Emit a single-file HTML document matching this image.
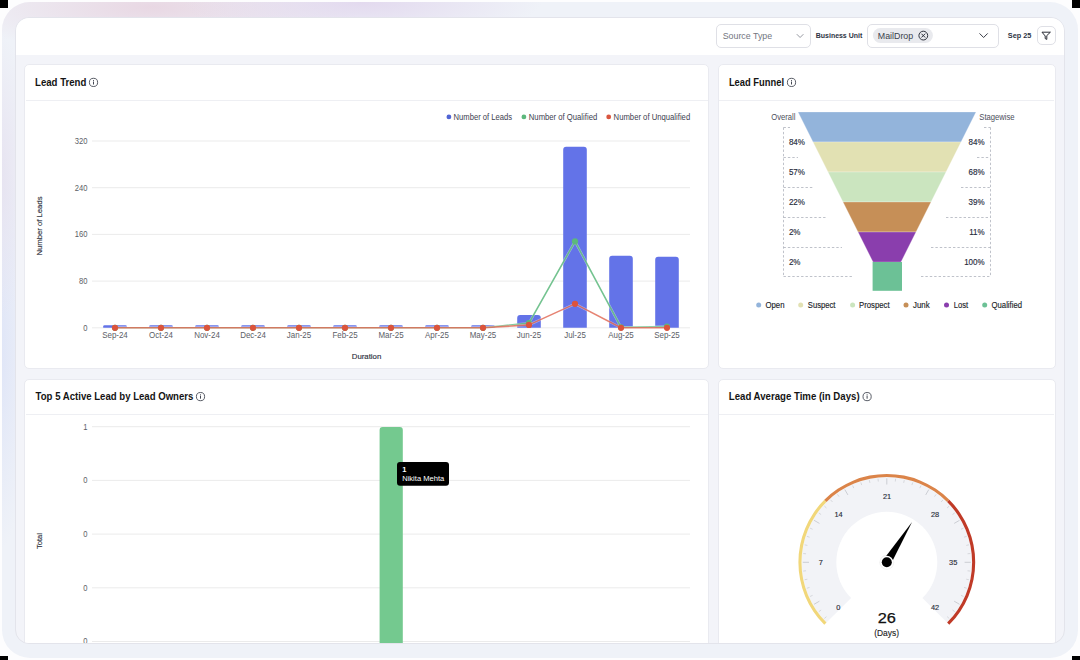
<!DOCTYPE html>
<html><head><meta charset="utf-8">
<style>
html,body{margin:0;padding:0;}
body{width:1080px;height:660px;position:relative;overflow:hidden;background:#fdfdfe;font-family:"Liberation Sans", sans-serif;}
.corner{position:absolute;width:8px;height:8px;background:#000;}
.frame{position:absolute;left:2px;top:2px;width:1076px;height:656px;border-radius:28px;background:#eff2f8;overflow:hidden;}
.glow{position:absolute;border-radius:50%;}
.panel{position:absolute;left:15px;top:17px;width:1048px;height:625px;border-radius:14px;background:#f3f4f9;
  border:1px solid #e3e4eb;overflow:hidden;}
.hdr{position:absolute;left:0;top:0;width:1048px;height:37px;background:#fff;}
.card{position:absolute;background:#fff;border:1px solid #e9eaf0;border-radius:5px;box-sizing:border-box;}
.sel{position:absolute;border:1px solid #dfe0e6;border-radius:5px;box-sizing:border-box;background:#fff;}
svg{position:absolute;left:0;top:0;}
text{font-family:"Liberation Sans", sans-serif;}
.ax{font-size:7.6px;fill:#5b5e66;}
.an{font-size:7.6px;fill:#2e3240;stroke:#2e3240;stroke-width:0.15;}
.lg{font-size:7.8px;fill:#3d4150;}
.fp{font-size:8px;fill:#262b3b;stroke:#262b3b;stroke-width:0.14;}
.fl{font-size:8px;fill:#4a4e5a;}
.fg{font-size:8px;fill:#1a1d27;stroke:#1a1d27;stroke-width:0.14;}
.tt{font-size:7.5px;fill:#fff;}
.gl{font-size:7.4px;fill:#2a2e3a;stroke:#2a2e3a;stroke-width:0.15;}
.gv{font-size:14.9px;fill:#111;stroke:#111;stroke-width:0.25;}
.gd{font-size:8.6px;fill:#222;stroke:#222;stroke-width:0.12;}
.hs{font-size:9.3px;fill:#73767f;}
.hb{font-size:7.3px;font-weight:bold;fill:#2d3344;}
.hm{font-size:8.2px;fill:#3a3f4b;}
.title{font-size:10px;font-weight:bold;fill:#141414;}
</style></head><body>
<div class="corner" style="left:0;top:0"></div>
<div class="corner" style="right:0;top:0"></div>
<div class="corner" style="left:0;bottom:0;height:4px"></div>
<div class="corner" style="right:0;bottom:0;height:4px"></div>
<div class="frame">
  <div class="glow" style="left:-60px;top:-40px;width:420px;height:90px;background:radial-gradient(closest-side,rgba(232,214,226,0.95),rgba(232,214,226,0))"></div>
  <div class="glow" style="left:180px;top:-40px;width:360px;height:80px;background:radial-gradient(closest-side,rgba(226,216,238,0.95),rgba(226,216,238,0))"></div>
  <div class="glow" style="left:-40px;top:150px;width:70px;height:400px;background:radial-gradient(closest-side,rgba(222,228,247,1),rgba(222,228,247,0))"></div>
  <div class="glow" style="left:-40px;top:30px;width:70px;height:290px;background:radial-gradient(closest-side,rgba(230,226,240,1),rgba(230,226,240,0))"></div>
</div>
<div class="panel">
  <div class="hdr"></div>
  <div class="card" style="left:8px;top:46px;width:685px;height:305px"></div>
  <div class="card" style="left:702px;top:46px;width:338px;height:305px"></div>
  <div class="card" style="left:8px;top:361px;width:685px;height:300px"></div>
  <div class="card" style="left:702px;top:361px;width:338px;height:300px"></div>
</div>
<div class="sel" style="left:716px;top:23.5px;width:95px;height:24px"></div>
<div class="sel" style="left:867px;top:23.5px;width:131.5px;height:24.5px"></div>
<div class="sel" style="left:1036.5px;top:26px;width:19px;height:19px"></div>
<svg width="1080" height="660" viewBox="0 0 1080 660">
<defs><clipPath id="pc"><rect x="16" y="18" width="1048" height="625" rx="13"/></clipPath></defs>
<g clip-path="url(#pc)">
<line x1="26" y1="100.5" x2="708" y2="100.5" stroke="#eeeff3"/>
<line x1="719" y1="100.5" x2="1054" y2="100.5" stroke="#eeeff3"/>
<line x1="26" y1="414.5" x2="708" y2="414.5" stroke="#eeeff3"/>
<line x1="719" y1="414.5" x2="1054" y2="414.5" stroke="#eeeff3"/>
<text x="35" y="85.8" class="title" textLength="51.4" lengthAdjust="spacingAndGlyphs">Lead Trend</text><circle cx="93.5" cy="82.4" r="4.1" fill="none" stroke="#3a3e4a" stroke-width="0.85"/><line x1="93.5" y1="81.9" x2="93.5" y2="84.10000000000001" stroke="#3a3e4a" stroke-width="0.95" stroke-linecap="round"/><circle cx="93.5" cy="80.5" r="0.55" fill="#3a3e4a"/>
<text x="728.9" y="85.8" class="title" textLength="55.2" lengthAdjust="spacingAndGlyphs">Lead Funnel</text><circle cx="791.5" cy="82.4" r="4.1" fill="none" stroke="#3a3e4a" stroke-width="0.85"/><line x1="791.5" y1="81.9" x2="791.5" y2="84.10000000000001" stroke="#3a3e4a" stroke-width="0.95" stroke-linecap="round"/><circle cx="791.5" cy="80.5" r="0.55" fill="#3a3e4a"/>
<text x="35.6" y="400.3" class="title" textLength="157.8" lengthAdjust="spacingAndGlyphs">Top 5 Active Lead by Lead Owners</text><circle cx="200.5" cy="396.6" r="4.1" fill="none" stroke="#3a3e4a" stroke-width="0.85"/><line x1="200.5" y1="396.1" x2="200.5" y2="398.3" stroke="#3a3e4a" stroke-width="0.95" stroke-linecap="round"/><circle cx="200.5" cy="394.70000000000005" r="0.55" fill="#3a3e4a"/>
<text x="728.8" y="400.3" class="title" textLength="130.8" lengthAdjust="spacingAndGlyphs">Lead Average Time (in Days)</text><circle cx="867.1" cy="396.6" r="4.1" fill="none" stroke="#3a3e4a" stroke-width="0.85"/><line x1="867.1" y1="396.1" x2="867.1" y2="398.3" stroke="#3a3e4a" stroke-width="0.95" stroke-linecap="round"/><circle cx="867.1" cy="394.70000000000005" r="0.55" fill="#3a3e4a"/>
<line x1="92" y1="141.00" x2="690" y2="141.00" stroke="#ebebeb" stroke-width="1"/><text x="87.4" y="143.85" class="ax" text-anchor="end" textLength="12.68" lengthAdjust="spacingAndGlyphs" style="font-size:8.3px">320</text><line x1="92" y1="187.70" x2="690" y2="187.70" stroke="#ebebeb" stroke-width="1"/><text x="87.4" y="190.55" class="ax" text-anchor="end" textLength="12.68" lengthAdjust="spacingAndGlyphs" style="font-size:8.3px">240</text><line x1="92" y1="234.40" x2="690" y2="234.40" stroke="#ebebeb" stroke-width="1"/><text x="87.4" y="237.25" class="ax" text-anchor="end" textLength="12.68" lengthAdjust="spacingAndGlyphs" style="font-size:8.3px">160</text><line x1="92" y1="281.10" x2="690" y2="281.10" stroke="#ebebeb" stroke-width="1"/><text x="87.4" y="283.95" class="ax" text-anchor="end" textLength="8.45" lengthAdjust="spacingAndGlyphs" style="font-size:8.3px">80</text><line x1="92" y1="327.80" x2="690" y2="327.80" stroke="#ebebeb" stroke-width="1"/><text x="87.4" y="330.65" class="ax" text-anchor="end" textLength="4.23" lengthAdjust="spacingAndGlyphs" style="font-size:8.3px">0</text><path d="M103.20,327.8 V326.52 Q103.20,325.23 104.48,325.23 H125.52 Q126.80,325.23 126.80,326.52 V327.8 Z" fill="#6373e8"/><text x="115" y="337.8" class="ax" text-anchor="middle" textLength="25.63" lengthAdjust="spacingAndGlyphs" style="font-size:8.3px">Sep-24</text><path d="M149.20,327.8 V326.52 Q149.20,325.23 150.48,325.23 H171.52 Q172.80,325.23 172.80,326.52 V327.8 Z" fill="#6373e8"/><text x="161" y="337.8" class="ax" text-anchor="middle" textLength="23.86" lengthAdjust="spacingAndGlyphs" style="font-size:8.3px">Oct-24</text><path d="M195.20,327.8 V326.52 Q195.20,325.23 196.48,325.23 H217.52 Q218.80,325.23 218.80,326.52 V327.8 Z" fill="#6373e8"/><text x="207" y="337.8" class="ax" text-anchor="middle" textLength="25.63" lengthAdjust="spacingAndGlyphs" style="font-size:8.3px">Nov-24</text><path d="M241.20,327.8 V326.52 Q241.20,325.23 242.48,325.23 H263.52 Q264.80,325.23 264.80,326.52 V327.8 Z" fill="#6373e8"/><text x="253" y="337.8" class="ax" text-anchor="middle" textLength="25.63" lengthAdjust="spacingAndGlyphs" style="font-size:8.3px">Dec-24</text><path d="M287.20,327.8 V326.52 Q287.20,325.23 288.48,325.23 H309.52 Q310.80,325.23 310.80,326.52 V327.8 Z" fill="#6373e8"/><text x="299" y="337.8" class="ax" text-anchor="middle" textLength="24.31" lengthAdjust="spacingAndGlyphs" style="font-size:8.3px">Jan-25</text><path d="M333.20,327.8 V326.52 Q333.20,325.23 334.48,325.23 H355.52 Q356.80,325.23 356.80,326.52 V327.8 Z" fill="#6373e8"/><text x="345" y="337.8" class="ax" text-anchor="middle" textLength="25.19" lengthAdjust="spacingAndGlyphs" style="font-size:8.3px">Feb-25</text><path d="M379.20,327.8 V326.52 Q379.20,325.23 380.48,325.23 H401.52 Q402.80,325.23 402.80,326.52 V327.8 Z" fill="#6373e8"/><text x="391" y="337.8" class="ax" text-anchor="middle" textLength="25.18" lengthAdjust="spacingAndGlyphs" style="font-size:8.3px">Mar-25</text><path d="M425.20,327.8 V326.52 Q425.20,325.23 426.48,325.23 H447.52 Q448.80,325.23 448.80,326.52 V327.8 Z" fill="#6373e8"/><text x="437" y="337.8" class="ax" text-anchor="middle" textLength="23.86" lengthAdjust="spacingAndGlyphs" style="font-size:8.3px">Apr-25</text><path d="M471.20,327.8 V326.52 Q471.20,325.23 472.48,325.23 H493.52 Q494.80,325.23 494.80,326.52 V327.8 Z" fill="#6373e8"/><text x="483" y="337.8" class="ax" text-anchor="middle" textLength="26.51" lengthAdjust="spacingAndGlyphs" style="font-size:8.3px">May-25</text><path d="M517.20,327.8 V317.96 Q517.20,314.96 520.20,314.96 H537.80 Q540.80,314.96 540.80,317.96 V327.8 Z" fill="#6373e8"/><text x="529" y="337.8" class="ax" text-anchor="middle" textLength="24.31" lengthAdjust="spacingAndGlyphs" style="font-size:8.3px">Jun-25</text><path d="M563.20,327.8 V149.84 Q563.20,146.84 566.20,146.84 H583.80 Q586.80,146.84 586.80,149.84 V327.8 Z" fill="#6373e8"/><text x="575" y="337.8" class="ax" text-anchor="middle" textLength="21.65" lengthAdjust="spacingAndGlyphs" style="font-size:8.3px">Jul-25</text><path d="M609.20,327.8 V258.82 Q609.20,255.82 612.20,255.82 H629.80 Q632.80,255.82 632.80,258.82 V327.8 Z" fill="#6373e8"/><text x="621" y="337.8" class="ax" text-anchor="middle" textLength="25.63" lengthAdjust="spacingAndGlyphs" style="font-size:8.3px">Aug-25</text><path d="M655.20,327.8 V259.87 Q655.20,256.87 658.20,256.87 H675.80 Q678.80,256.87 678.80,259.87 V327.8 Z" fill="#6373e8"/><text x="667" y="337.8" class="ax" text-anchor="middle" textLength="25.63" lengthAdjust="spacingAndGlyphs" style="font-size:8.3px">Sep-25</text><polyline points="115,327.80 161,327.80 207,327.80 253,327.80 299,327.80 345,327.80 391,327.80 437,327.80 483,327.80 529,323.13 575,241.41 621,327.33 667,326.52" fill="none" stroke="#fff" stroke-width="2.4" stroke-opacity="0.45" stroke-linejoin="round"/><polyline points="115,327.80 161,327.80 207,327.80 253,327.80 299,327.80 345,327.80 391,327.80 437,327.80 483,327.80 529,323.13 575,241.41 621,327.33 667,326.52" fill="none" stroke="#5cb87c" stroke-width="1.6" stroke-opacity="0.85" stroke-linejoin="round"/><circle cx="115" cy="327.80" r="3.1" fill="#5cb87c"/><circle cx="161" cy="327.80" r="3.1" fill="#5cb87c"/><circle cx="207" cy="327.80" r="3.1" fill="#5cb87c"/><circle cx="253" cy="327.80" r="3.1" fill="#5cb87c"/><circle cx="299" cy="327.80" r="3.1" fill="#5cb87c"/><circle cx="345" cy="327.80" r="3.1" fill="#5cb87c"/><circle cx="391" cy="327.80" r="3.1" fill="#5cb87c"/><circle cx="437" cy="327.80" r="3.1" fill="#5cb87c"/><circle cx="483" cy="327.80" r="3.1" fill="#5cb87c"/><circle cx="529" cy="323.13" r="3.1" fill="#5cb87c"/><circle cx="575" cy="241.41" r="3.1" fill="#5cb87c"/><circle cx="621" cy="327.33" r="3.1" fill="#5cb87c"/><circle cx="667" cy="326.52" r="3.1" fill="#5cb87c"/><polyline points="115,327.80 161,327.80 207,327.80 253,327.80 299,327.80 345,327.80 391,327.80 437,327.80 483,327.80 529,324.88 575,303.87 621,327.80 667,327.80" fill="none" stroke="#fff" stroke-width="2.4" stroke-opacity="0.45" stroke-linejoin="round"/><polyline points="115,327.80 161,327.80 207,327.80 253,327.80 299,327.80 345,327.80 391,327.80 437,327.80 483,327.80 529,324.88 575,303.87 621,327.80 667,327.80" fill="none" stroke="#dc533c" stroke-width="1.6" stroke-opacity="0.72" stroke-linejoin="round"/><circle cx="115" cy="327.80" r="3.1" fill="#dc533c"/><circle cx="161" cy="327.80" r="3.1" fill="#dc533c"/><circle cx="207" cy="327.80" r="3.1" fill="#dc533c"/><circle cx="253" cy="327.80" r="3.1" fill="#dc533c"/><circle cx="299" cy="327.80" r="3.1" fill="#dc533c"/><circle cx="345" cy="327.80" r="3.1" fill="#dc533c"/><circle cx="391" cy="327.80" r="3.1" fill="#dc533c"/><circle cx="437" cy="327.80" r="3.1" fill="#dc533c"/><circle cx="483" cy="327.80" r="3.1" fill="#dc533c"/><circle cx="529" cy="324.88" r="3.1" fill="#dc533c"/><circle cx="575" cy="303.87" r="3.1" fill="#dc533c"/><circle cx="621" cy="327.80" r="3.1" fill="#dc533c"/><circle cx="667" cy="327.80" r="3.1" fill="#dc533c"/><circle cx="448.9" cy="116.9" r="2.4" fill="#5064d4"/><text x="453.6" y="119.8" class="lg" textLength="58.4" lengthAdjust="spacingAndGlyphs" style="font-size:8.6px">Number of Leads</text><circle cx="523.9" cy="116.9" r="2.4" fill="#5cb87c"/><text x="528.8000000000001" y="119.8" class="lg" textLength="68.4" lengthAdjust="spacingAndGlyphs" style="font-size:8.6px">Number of Qualified</text><circle cx="608.7" cy="116.9" r="2.4" fill="#d9553f"/><text x="613.6" y="119.8" class="lg" textLength="76.6" lengthAdjust="spacingAndGlyphs" style="font-size:8.6px">Number of Unqualified</text><text x="366.5" y="358.9" class="an" text-anchor="middle" textLength="29.5" lengthAdjust="spacingAndGlyphs">Duration</text><text transform="translate(42.4,226) rotate(-90)" text-anchor="middle" class="an" textLength="59" lengthAdjust="spacingAndGlyphs">Number of Leads</text>
<polygon points="798,112 976,112 961,142 813,142" fill="#93b4db" stroke="#fff" stroke-width="0.5" stroke-opacity="0.5"/><polygon points="813,142 961,142 946,172 828,172" fill="#e2e1b3" stroke="#fff" stroke-width="0.5" stroke-opacity="0.5"/><polygon points="828,172 946,172 931,202 843,202" fill="#cbe5bf" stroke="#fff" stroke-width="0.5" stroke-opacity="0.5"/><polygon points="843,202 931,202 916,232 858,232" fill="#c68f57" stroke="#fff" stroke-width="0.5" stroke-opacity="0.5"/><polygon points="858,232 916,232 901,262 873,262" fill="#8a3ead" stroke="#fff" stroke-width="0.5" stroke-opacity="0.5"/><rect x="872.6" y="262" width="29.4" height="28.8" fill="#6cc196"/><line x1="783.5" y1="127.5" x2="783.5" y2="276.5" stroke="#aeb2bc" stroke-width="0.8" stroke-dasharray="2.4,2"/><line x1="783.5" y1="127.5" x2="790" y2="127.5" stroke="#aeb2bc" stroke-width="0.8" stroke-dasharray="2.4,2"/><line x1="783.5" y1="157.5" x2="798" y2="157.5" stroke="#aeb2bc" stroke-width="0.8" stroke-dasharray="2.4,2"/><line x1="783.5" y1="187.5" x2="813" y2="187.5" stroke="#aeb2bc" stroke-width="0.8" stroke-dasharray="2.4,2"/><line x1="783.5" y1="217.5" x2="827" y2="217.5" stroke="#aeb2bc" stroke-width="0.8" stroke-dasharray="2.4,2"/><line x1="783.5" y1="247.5" x2="842" y2="247.5" stroke="#aeb2bc" stroke-width="0.8" stroke-dasharray="2.4,2"/><line x1="783.5" y1="276.5" x2="852" y2="276.5" stroke="#aeb2bc" stroke-width="0.8" stroke-dasharray="2.4,2"/><line x1="990.5" y1="127.5" x2="990.5" y2="276.5" stroke="#aeb2bc" stroke-width="0.8" stroke-dasharray="2.4,2"/><line x1="984" y1="127.5" x2="990.5" y2="127.5" stroke="#aeb2bc" stroke-width="0.8" stroke-dasharray="2.4,2"/><line x1="977" y1="157.5" x2="990.5" y2="157.5" stroke="#aeb2bc" stroke-width="0.8" stroke-dasharray="2.4,2"/><line x1="961" y1="187.5" x2="990.5" y2="187.5" stroke="#aeb2bc" stroke-width="0.8" stroke-dasharray="2.4,2"/><line x1="946" y1="217.5" x2="990.5" y2="217.5" stroke="#aeb2bc" stroke-width="0.8" stroke-dasharray="2.4,2"/><line x1="931" y1="247.5" x2="990.5" y2="247.5" stroke="#aeb2bc" stroke-width="0.8" stroke-dasharray="2.4,2"/><line x1="921" y1="276.5" x2="990.5" y2="276.5" stroke="#aeb2bc" stroke-width="0.8" stroke-dasharray="2.4,2"/><text x="788.9" y="144.95" class="fp" textLength="16.01" lengthAdjust="spacingAndGlyphs" style="font-size:8.7px">84%</text><text x="984.6" y="144.95" class="fp" text-anchor="end" textLength="16.01" lengthAdjust="spacingAndGlyphs" style="font-size:8.7px">84%</text><text x="788.9" y="174.95" class="fp" textLength="16.01" lengthAdjust="spacingAndGlyphs" style="font-size:8.7px">57%</text><text x="984.6" y="174.95" class="fp" text-anchor="end" textLength="16.01" lengthAdjust="spacingAndGlyphs" style="font-size:8.7px">68%</text><text x="788.9" y="204.95" class="fp" textLength="16.01" lengthAdjust="spacingAndGlyphs" style="font-size:8.7px">22%</text><text x="984.6" y="204.95" class="fp" text-anchor="end" textLength="16.01" lengthAdjust="spacingAndGlyphs" style="font-size:8.7px">39%</text><text x="788.9" y="234.95" class="fp" textLength="11.56" lengthAdjust="spacingAndGlyphs" style="font-size:8.7px">2%</text><text x="984.6" y="234.95" class="fp" text-anchor="end" textLength="15.42" lengthAdjust="spacingAndGlyphs" style="font-size:8.7px">11%</text><text x="788.9" y="264.95" class="fp" textLength="11.56" lengthAdjust="spacingAndGlyphs" style="font-size:8.7px">2%</text><text x="984.6" y="264.95" class="fp" text-anchor="end" textLength="20.46" lengthAdjust="spacingAndGlyphs" style="font-size:8.7px">100%</text><text x="771.3" y="119.9" class="fl" textLength="24.2" lengthAdjust="spacingAndGlyphs" style="font-size:8.6px">Overall</text><text x="979.3" y="119.9" class="fl" textLength="35.3" lengthAdjust="spacingAndGlyphs" style="font-size:8.6px">Stagewise</text><circle cx="758.7" cy="305.1" r="2.5" fill="#93b4db"/><text x="765.5" y="307.9" class="fg" textLength="19" lengthAdjust="spacingAndGlyphs" style="font-size:8.7px">Open</text><circle cx="800.7" cy="305.1" r="2.5" fill="#e2e1b3"/><text x="807.8000000000001" y="307.9" class="fg" textLength="27.6" lengthAdjust="spacingAndGlyphs" style="font-size:8.7px">Suspect</text><circle cx="852.6" cy="305.1" r="2.5" fill="#cbe5bf"/><text x="859.1" y="307.9" class="fg" textLength="30.5" lengthAdjust="spacingAndGlyphs" style="font-size:8.7px">Prospect</text><circle cx="906" cy="305.1" r="2.5" fill="#c68f57"/><text x="913.0" y="307.9" class="fg" textLength="16.6" lengthAdjust="spacingAndGlyphs" style="font-size:8.7px">Junk</text><circle cx="946.5" cy="305.1" r="2.5" fill="#8a3ead"/><text x="953.7" y="307.9" class="fg" textLength="14.4" lengthAdjust="spacingAndGlyphs" style="font-size:8.7px">Lost</text><circle cx="984.7" cy="305.1" r="2.5" fill="#6cc196"/><text x="991.6" y="307.9" class="fg" textLength="30.4" lengthAdjust="spacingAndGlyphs" style="font-size:8.7px">Qualified</text>
<line x1="92" y1="426.70" x2="690" y2="426.70" stroke="#ebebeb" stroke-width="1"/><text x="87.4" y="429.55" class="ax" text-anchor="end" textLength="4.23" lengthAdjust="spacingAndGlyphs" style="font-size:8.3px">1</text><line x1="92" y1="480.40" x2="690" y2="480.40" stroke="#ebebeb" stroke-width="1"/><text x="87.4" y="483.25" class="ax" text-anchor="end" textLength="4.23" lengthAdjust="spacingAndGlyphs" style="font-size:8.3px">0</text><line x1="92" y1="534.10" x2="690" y2="534.10" stroke="#ebebeb" stroke-width="1"/><text x="87.4" y="536.95" class="ax" text-anchor="end" textLength="4.23" lengthAdjust="spacingAndGlyphs" style="font-size:8.3px">0</text><line x1="92" y1="587.80" x2="690" y2="587.80" stroke="#ebebeb" stroke-width="1"/><text x="87.4" y="590.65" class="ax" text-anchor="end" textLength="4.23" lengthAdjust="spacingAndGlyphs" style="font-size:8.3px">0</text><line x1="92" y1="641.50" x2="690" y2="641.50" stroke="#ebebeb" stroke-width="1"/><text x="87.4" y="644.35" class="ax" text-anchor="end" textLength="4.23" lengthAdjust="spacingAndGlyphs" style="font-size:8.3px">0</text><path d="M379.6,650 V430 Q379.6,427 382.6,427 H399.8 Q402.8,427 402.8,430 V650 Z" fill="#74c98f"/><text transform="translate(42.4,541) rotate(-90)" text-anchor="middle" class="an">Total</text><rect x="397" y="462" width="52" height="23.8" rx="3" fill="#000"/><text x="402.2" y="471.6" class="tt" font-weight="bold">1</text><text x="402.2" y="481" class="tt" textLength="42" lengthAdjust="spacingAndGlyphs">Nikita Mehta</text>
<path d="M826.48,622.62 A85.3,85.3 0 1 1 947.12,622.62 L922.51,598.01 A50.5,50.5 0 1 0 851.09,598.01 Z" fill="#f2f3f7"/><path d="M824.29,624.81 A88.4,88.4 0 0 1 824.29,499.79 L826.48,501.98 A85.3,85.3 0 0 0 826.48,622.62 Z" fill="#f1d77a"/><path d="M824.29,499.79 A88.4,88.4 0 0 1 949.31,499.79 L947.12,501.98 A85.3,85.3 0 0 0 826.48,501.98 Z" fill="#db8449"/><path d="M949.31,499.79 A88.4,88.4 0 0 1 949.31,624.81 L947.12,622.62 A85.3,85.3 0 0 0 947.12,501.98 Z" fill="#c03a27"/><line x1="824.38" y1="618.51" x2="826.46" y2="616.63" stroke="#c2c4ca" stroke-width="0.6"/><line x1="818.84" y1="611.67" x2="821.11" y2="610.03" stroke="#c2c4ca" stroke-width="0.6"/><line x1="814.05" y1="604.30" x2="819.42" y2="601.20" stroke="#c2c4ca" stroke-width="0.8"/><line x1="810.06" y1="596.47" x2="812.62" y2="595.33" stroke="#c2c4ca" stroke-width="0.6"/><line x1="806.91" y1="588.26" x2="809.57" y2="587.39" stroke="#c2c4ca" stroke-width="0.6"/><line x1="804.64" y1="579.76" x2="807.37" y2="579.18" stroke="#c2c4ca" stroke-width="0.6"/><line x1="803.26" y1="571.08" x2="806.04" y2="570.79" stroke="#c2c4ca" stroke-width="0.6"/><line x1="802.80" y1="562.30" x2="809.00" y2="562.30" stroke="#c2c4ca" stroke-width="0.8"/><line x1="803.26" y1="553.52" x2="806.04" y2="553.81" stroke="#c2c4ca" stroke-width="0.6"/><line x1="804.64" y1="544.84" x2="807.37" y2="545.42" stroke="#c2c4ca" stroke-width="0.6"/><line x1="806.91" y1="536.34" x2="809.57" y2="537.21" stroke="#c2c4ca" stroke-width="0.6"/><line x1="810.06" y1="528.13" x2="812.62" y2="529.27" stroke="#c2c4ca" stroke-width="0.6"/><line x1="814.05" y1="520.30" x2="819.42" y2="523.40" stroke="#c2c4ca" stroke-width="0.8"/><line x1="818.84" y1="512.93" x2="821.11" y2="514.57" stroke="#c2c4ca" stroke-width="0.6"/><line x1="824.38" y1="506.09" x2="826.46" y2="507.97" stroke="#c2c4ca" stroke-width="0.6"/><line x1="830.59" y1="499.88" x2="832.47" y2="501.96" stroke="#c2c4ca" stroke-width="0.6"/><line x1="837.43" y1="494.34" x2="839.07" y2="496.61" stroke="#c2c4ca" stroke-width="0.6"/><line x1="844.80" y1="489.55" x2="847.90" y2="494.92" stroke="#c2c4ca" stroke-width="0.8"/><line x1="852.63" y1="485.56" x2="853.77" y2="488.12" stroke="#c2c4ca" stroke-width="0.6"/><line x1="860.84" y1="482.41" x2="861.71" y2="485.07" stroke="#c2c4ca" stroke-width="0.6"/><line x1="869.34" y1="480.14" x2="869.92" y2="482.87" stroke="#c2c4ca" stroke-width="0.6"/><line x1="878.02" y1="478.76" x2="878.31" y2="481.54" stroke="#c2c4ca" stroke-width="0.6"/><line x1="886.80" y1="478.30" x2="886.80" y2="484.50" stroke="#c2c4ca" stroke-width="0.8"/><line x1="895.58" y1="478.76" x2="895.29" y2="481.54" stroke="#c2c4ca" stroke-width="0.6"/><line x1="904.26" y1="480.14" x2="903.68" y2="482.87" stroke="#c2c4ca" stroke-width="0.6"/><line x1="912.76" y1="482.41" x2="911.89" y2="485.07" stroke="#c2c4ca" stroke-width="0.6"/><line x1="920.97" y1="485.56" x2="919.83" y2="488.12" stroke="#c2c4ca" stroke-width="0.6"/><line x1="928.80" y1="489.55" x2="925.70" y2="494.92" stroke="#c2c4ca" stroke-width="0.8"/><line x1="936.17" y1="494.34" x2="934.53" y2="496.61" stroke="#c2c4ca" stroke-width="0.6"/><line x1="943.01" y1="499.88" x2="941.13" y2="501.96" stroke="#c2c4ca" stroke-width="0.6"/><line x1="949.22" y1="506.09" x2="947.14" y2="507.97" stroke="#c2c4ca" stroke-width="0.6"/><line x1="954.76" y1="512.93" x2="952.49" y2="514.57" stroke="#c2c4ca" stroke-width="0.6"/><line x1="959.55" y1="520.30" x2="954.18" y2="523.40" stroke="#c2c4ca" stroke-width="0.8"/><line x1="963.54" y1="528.13" x2="960.98" y2="529.27" stroke="#c2c4ca" stroke-width="0.6"/><line x1="966.69" y1="536.34" x2="964.03" y2="537.21" stroke="#c2c4ca" stroke-width="0.6"/><line x1="968.96" y1="544.84" x2="966.23" y2="545.42" stroke="#c2c4ca" stroke-width="0.6"/><line x1="970.34" y1="553.52" x2="967.56" y2="553.81" stroke="#c2c4ca" stroke-width="0.6"/><line x1="970.80" y1="562.30" x2="964.60" y2="562.30" stroke="#c2c4ca" stroke-width="0.8"/><line x1="970.34" y1="571.08" x2="967.56" y2="570.79" stroke="#c2c4ca" stroke-width="0.6"/><line x1="968.96" y1="579.76" x2="966.23" y2="579.18" stroke="#c2c4ca" stroke-width="0.6"/><line x1="966.69" y1="588.26" x2="964.03" y2="587.39" stroke="#c2c4ca" stroke-width="0.6"/><line x1="963.54" y1="596.47" x2="960.98" y2="595.33" stroke="#c2c4ca" stroke-width="0.6"/><line x1="959.55" y1="604.30" x2="954.18" y2="601.20" stroke="#c2c4ca" stroke-width="0.8"/><line x1="954.76" y1="611.67" x2="952.49" y2="610.03" stroke="#c2c4ca" stroke-width="0.6"/><line x1="949.22" y1="618.51" x2="947.14" y2="616.63" stroke="#c2c4ca" stroke-width="0.6"/><text x="838.30" y="609.70" class="gl" text-anchor="middle">0</text><text x="820.70" y="564.80" class="gl" text-anchor="middle">7</text><text x="838.50" y="516.90" class="gl" text-anchor="middle">14</text><text x="887.00" y="499.00" class="gl" text-anchor="middle">21</text><text x="935.00" y="516.90" class="gl" text-anchor="middle">28</text><text x="953.20" y="564.90" class="gl" text-anchor="middle">35</text><text x="935.00" y="609.60" class="gl" text-anchor="middle">42</text><polygon points="912.07,522.08 883.07,559.96 890.53,564.64" fill="#000"/><circle cx="886.8" cy="562.3" r="7.5" fill="#000" fill-opacity="0.06"/><circle cx="886.8" cy="562.3" r="6.6" fill="#fff"/><circle cx="886.8" cy="562.3" r="5" fill="#000"/><text x="886.8" y="623.4" class="gv" text-anchor="middle" textLength="18.2" lengthAdjust="spacingAndGlyphs">26</text><text x="886.5999999999999" y="636.2" class="gd" text-anchor="middle" textLength="24.8" lengthAdjust="spacingAndGlyphs">(Days)</text>
<text x="722.7" y="38.7" class="hs" textLength="49.5" lengthAdjust="spacingAndGlyphs">Source Type</text>
<path d="M796.8,34.2 l3.3,3.3 l3.3,-3.3" fill="none" stroke="#8a8d96" stroke-width="0.9"/>
<text x="815.8" y="37.8" class="hb" textLength="46.4" lengthAdjust="spacingAndGlyphs">Business Unit</text>
<rect x="872.9" y="28" width="60" height="15" rx="7.5" fill="#e9eaee"/>
<text x="877.8" y="38.5" class="hm" textLength="35.4" lengthAdjust="spacingAndGlyphs">MailDrop</text>
<circle cx="923.3" cy="35.6" r="4.4" fill="none" stroke="#2f333d" stroke-width="1"/>
<path d="M921.4,33.7 l3.8,3.8 M925.2,33.7 l-3.8,3.8" stroke="#2f333d" stroke-width="1"/>
<path d="M979.5,33.4 l4.1,4.1 l4.1,-4.1" fill="none" stroke="#2f333d" stroke-width="0.95"/>
<text x="1007.8" y="37.8" class="hb" textLength="23.6" lengthAdjust="spacingAndGlyphs">Sep 25</text>
<g transform="translate(1041.2,31.0) scale(0.4)"><polygon points="22,3 2,3 10,12.46 10,19 14,21 14,12.46" fill="none" stroke="#1f232c" stroke-width="2.4" stroke-linejoin="round" stroke-linecap="round"/></g>
</g>
</svg>
</body></html>
